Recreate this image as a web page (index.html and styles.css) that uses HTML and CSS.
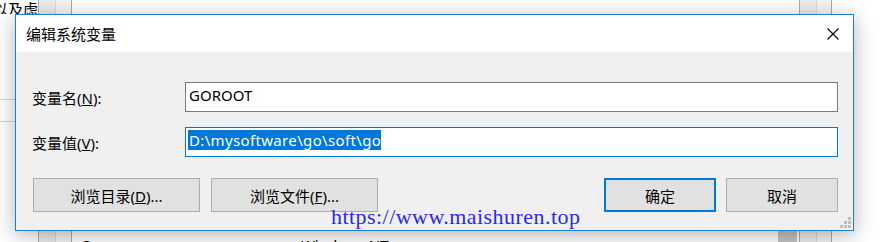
FILE: index.html
```html
<!DOCTYPE html>
<html lang="zh-CN">
<head>
    <meta charset="UTF-8">
    <title>编辑系统变量</title>
    <link rel="stylesheet" href="styles.css">
</head>
<body>

    <!-- Ventana de fondo, casi tapada por el diálogo -->
    <div class="behind">
        <div class="behind-top">以及虑</div>
        <div class="behind-bottom">
            <span class="cell-name">Go</span>
            <span class="cell-type">Windows NT</span>
        </div>
    </div>

    <!-- Diálogo -->
    <div class="dialog">
        <div class="titlebar">
            <span class="title">编辑系统变量</span>
            <svg class="close" width="12" height="12" viewBox="0 0 12 12">
                <path d="M0.5 0.5 L11.5 11.5 M11.5 0.5 L0.5 11.5" stroke="#000" stroke-width="1.1" fill="none"/>
            </svg>
        </div>

        <div class="content">
            <div class="row">
                <span class="label">变量名(<u>N</u>):</span>
                <div class="field">GOROOT</div>
            </div>
            <div class="row row-second">
                <span class="label">变量值(<u>V</u>):</span>
                <div class="field field-focus"><span class="selected">D:\mysoftware\go\soft\go</span></div>
            </div>
            <div class="buttons">
                <button class="btn btn-wide">浏览目录(<u>D</u>)...</button>
                <button class="btn btn-wide">浏览文件(<u>F</u>)...</button>
                <button class="btn btn-default btn-ok">确定</button>
                <button class="btn">取消</button>
            </div>
        </div>

        <svg class="grip" width="11" height="11" viewBox="0 0 11 11">
            <rect x="8" y="0" width="3" height="3" fill="#bdbdbd"/>
            <rect x="4" y="4" width="3" height="3" fill="#bdbdbd"/>
            <rect x="8" y="4" width="3" height="3" fill="#bdbdbd"/>
            <rect x="0" y="8" width="3" height="3" fill="#bdbdbd"/>
            <rect x="4" y="8" width="3" height="3" fill="#bdbdbd"/>
            <rect x="8" y="8" width="3" height="3" fill="#bdbdbd"/>
        </svg>
    </div>

    <div class="watermark">https://www.maishuren.top</div>

</body>
</html>
```

FILE: styles.css
```css
body {
    margin: 0;
    width: 892px;
    height: 242px;
    overflow: hidden;
    position: relative;
    background: #ffffff;
    font-family: "Segoe UI", "Noto Sans", "Noto Sans CJK SC", sans-serif;
    font-size: 15px;
    color: #000000;
}

.behind {
    height: 242px;
    display: flex;
    flex-direction: column;
    justify-content: space-between;
    background-image:
        linear-gradient(to bottom, transparent 99px, #d6d6d6 99px 100px, transparent 100px 121px, #d6d6d6 121px 122px, transparent 122px),
        linear-gradient(to right,
            transparent 38px, #adadad 38px 39px, #ececec 39px 55px, #d9d9d9 55px 56px, #f4f4f4 56px 71px, #a9a9a9 71px 72px,
            transparent 72px 799px, #adadad 799px 800px, #ececec 800px 816px, #d9d9d9 816px 817px, #f4f4f4 817px 831px, #a9a9a9 831px 832px,
            transparent 832px);
    background-size: 15px 100%, 100% 100%;
    background-repeat: no-repeat;
}

.behind-top {
    height: 14px;
    line-height: 18px;
    margin-left: -7px;
    overflow: hidden;
    font-family: "Noto Sans CJK SC", sans-serif;
}

.behind-bottom {
    height: 11px;
    overflow: hidden;
    line-height: 20px;
    padding-top: 4px;
    box-sizing: border-box;
    background: linear-gradient(to right, transparent 778px, #c4c4c4 778px 797px, transparent 797px);
}

.cell-name {
    display: inline-block;
    margin-left: 80px;
    width: 217px;
}

.dialog {
    position: absolute;
    left: 15px;
    top: 14px;
    width: 837px;
    height: 215px;
    border: 1px solid #1a7fd4;
    background: #f0f0f0;
    box-shadow: 0 4px 20px rgba(0, 0, 0, 0.3);
    display: flex;
    flex-direction: column;
}

.titlebar {
    height: 37px;
    background: #ffffff;
    display: flex;
    align-items: center;
    justify-content: space-between;
    padding: 0 14px 0 10px;
}

.title {
    line-height: 20px;
}

.close {
    display: block;
}

.content {
    padding: 30px 15px 0 16px;
}

.row {
    display: flex;
    height: 30px;
}

.row-second {
    margin-top: 15px;
}

.label {
    width: 153px;
    line-height: 30px;
    padding-top: 1px;
}

.field {
    width: 653px;
    height: 30px;
    box-sizing: border-box;
    border: 1px solid #7a7a7a;
    background: #ffffff;
    padding: 0 3px;
    line-height: 25px;
}

.field-focus {
    border-color: #0078d7;
    padding: 2px 2px;
    line-height: 20px;
}

.selected {
    display: inline-block;
    background: #0078d7;
    color: #ffffff;
    padding-left: 1px;
    line-height: 20px;
    letter-spacing: 0.35px;
}

.buttons {
    display: flex;
    gap: 10px;
    margin-top: 21px;
}

.btn {
    width: 112px;
    height: 34px;
    box-sizing: border-box;
    background: #e1e1e1;
    border: 1px solid #adadad;
    font-family: inherit;
    font-size: 15px;
    color: #000000;
    padding: 0;
}

.btn-wide {
    width: 167px;
}

.btn-wide:first-child {
    margin-left: 1px;
    margin-right: 1px;
}

.btn-default {
    border: 2px solid #0078d7;
}

.btn-ok {
    margin-left: auto;
}

.grip {
    position: absolute;
    right: 2px;
    bottom: 2px;
}

.watermark {
    position: absolute;
    left: 331px;
    top: 205px;
    font-family: "Liberation Serif", serif;
    font-size: 22px;
    letter-spacing: 0.45px;
    color: #2a2ae6;
    line-height: 24px;
}
```
